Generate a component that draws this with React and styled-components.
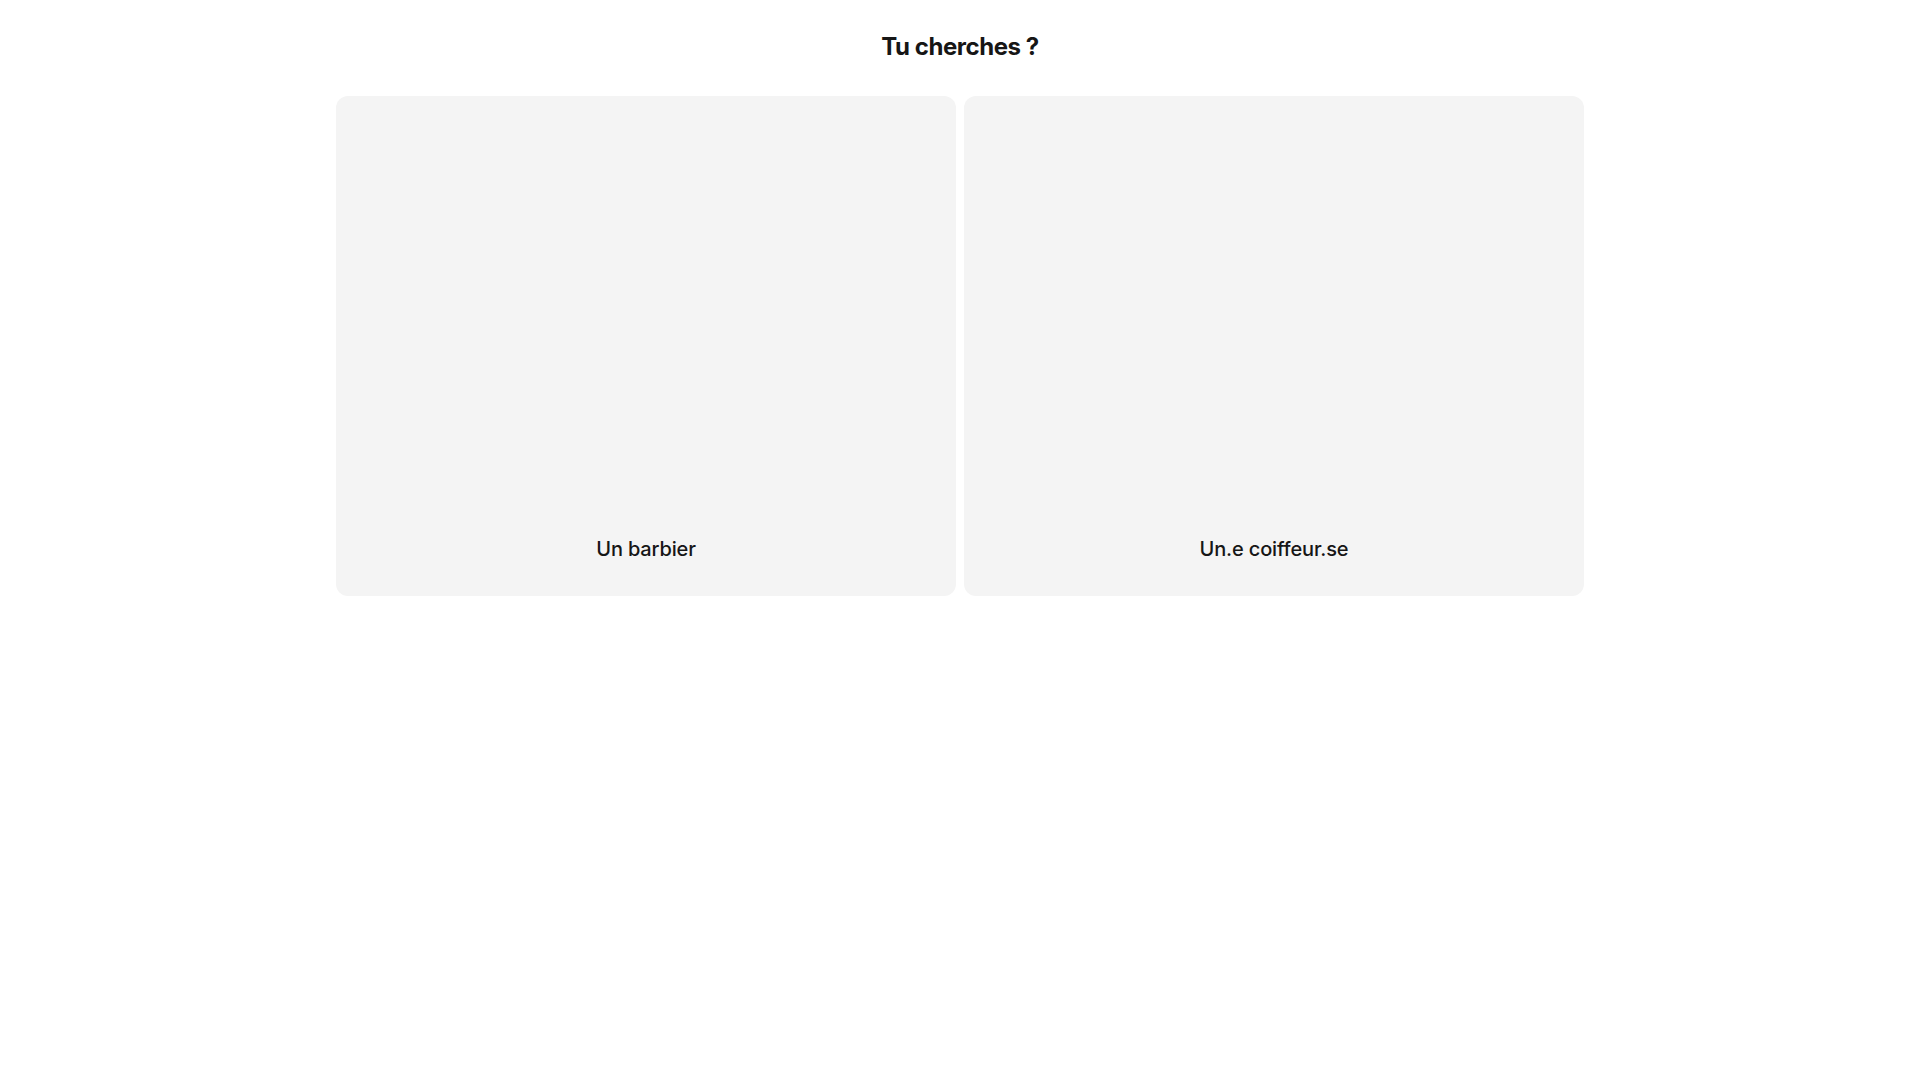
import styled, { createGlobalStyle } from 'styled-components'

//! Styles
const GlobalStyle = createGlobalStyle`
    body {
        margin: 0;
        background: #ffffff;
        font-family: Inter, 'Noto Sans', sans-serif;
        color: #161616;
    }
`

const Page = styled.main`
    width: 1248px;
    margin: 0 auto;
    padding-top: 31px;
`

const Title = styled.h2`
    margin: 0 0 33px;
    font-size: 24px;
    line-height: 32px;
    font-weight: 700;
    text-align: center;
    letter-spacing: -0.45px;
`

const Choices = styled.div`
    display: grid;
    grid-template-columns: 1fr 1fr;
    column-gap: 8px;
`

const Choice = styled.button`
    display: flex;
    flex-direction: column;
    justify-content: flex-end;
    align-items: center;
    height: 500px;
    padding: 0 0 33px;
    border: none;
    border-radius: 12px;
    background: #f4f4f4;
    font-family: inherit;
    font-size: 20px;
    line-height: 28px;
    font-weight: 500;
    letter-spacing: -0.15px;
    color: #161616;
    cursor: pointer;
`

const choices = ['Un barbier', 'Un.e coiffeur.se']

//? EXPORT
const App = () => (
    <>
        <GlobalStyle />
        <Page>
            <Title>Tu cherches ?</Title>
            <Choices>
                {choices.map((label) => (
                    <Choice key={label}>{label}</Choice>
                ))}
            </Choices>
        </Page>
    </>
)

export default App
